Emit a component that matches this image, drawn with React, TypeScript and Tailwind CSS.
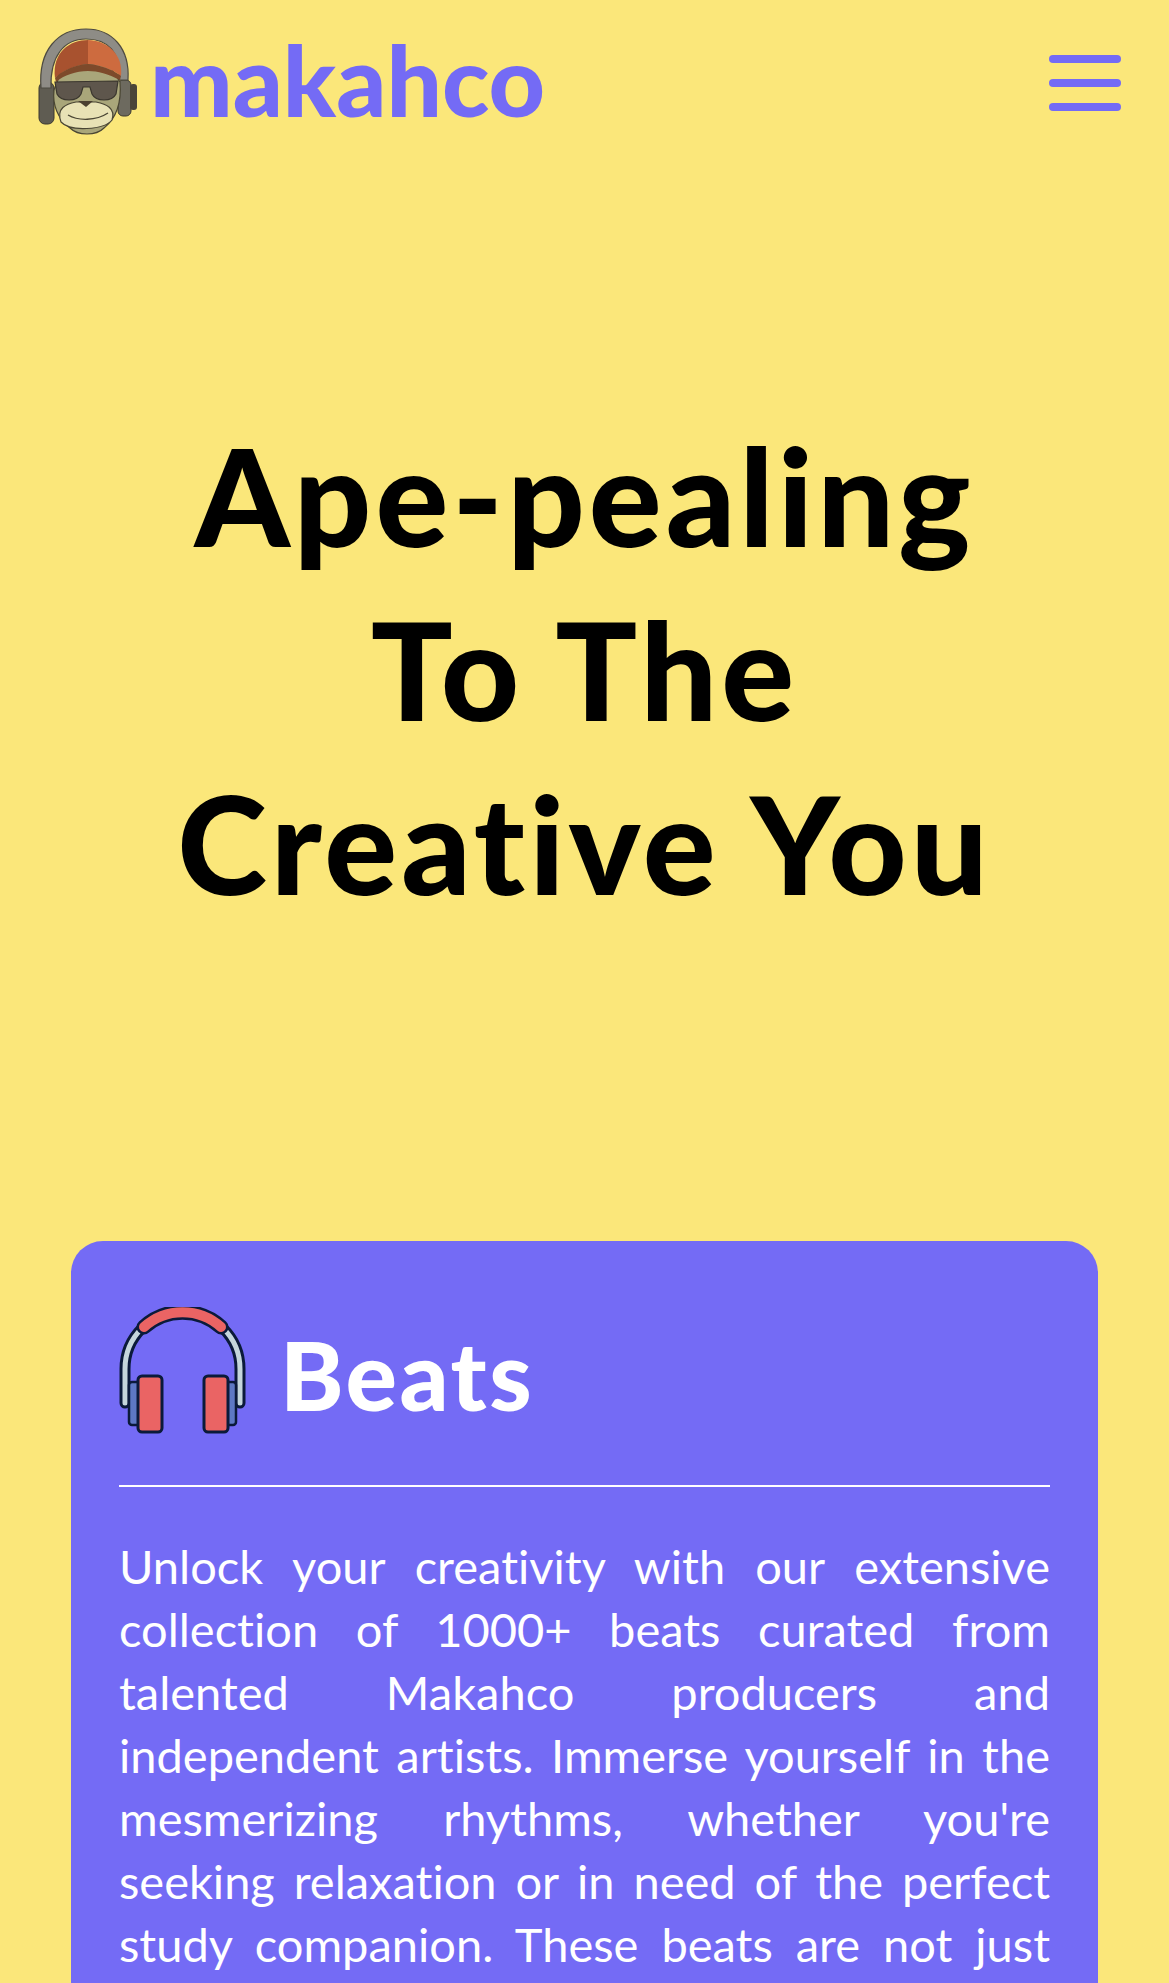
const Logo = () => (
  <svg viewBox="0 0 112 120" className="w-[112px] h-[120px] shrink-0">
    <rect x="11" y="62" width="15" height="42" rx="6" fill="#5f5c52" stroke="#3c392f" strokeWidth="1" />
    <rect x="90" y="60" width="13" height="36" rx="5" fill="#6d6a5f" stroke="#3c392f" strokeWidth="1" />
    <rect x="102" y="64" width="7" height="26" rx="3" fill="#4a4539" />
    <path d="M13 68 C10 30 30 9 58 9 C84 9 102 28 100 60 L91 60 C93 32 80 19 58 19 C36 19 22 36 23 68 Z" fill="#8e8c86" stroke="#4d4a41" strokeWidth="1.2" />
    <path d="M26 70 C24 88 32 100 42 108 C50 116 68 116 76 108 C86 100 94 86 92 62 L80 44 L36 44 Z" fill="#a9a67a" stroke="#4a4634" strokeWidth="1.2" />
    <path d="M27 58 C24 32 42 20 60 20 L60 44 C48 45 36 50 27 58 Z" fill="#a8522f" />
    <path d="M60 20 C78 20 96 34 93 56 C84 49 72 45 60 44 Z" fill="#cd6b3f" />
    <path d="M27 58 C36 49 48 45 60 44 C72 45 84 49 93 56 L92 60 C80 54 70 51 60 51 C48 51 36 55 28 62 Z" fill="#7d4a2b" />
    <path d="M27 62 L90 61 L88 74 C84 82 68 82 64 74 L62 67 L55 67 L53 74 C49 82 33 82 29 74 Z" fill="#5e564c" stroke="#3a362e" strokeWidth="1.2" />
    <path d="M33 102 C28 88 38 84 48 82 L68 82 C78 84 88 88 84 100 C76 110 42 112 33 102 Z" fill="#e8e2b5" stroke="#4a4634" strokeWidth="1.2" />
    <path d="M50 81 L65 81 L58 87 Z" fill="#4a4030" />
    <path d="M40 95 C50 101 68 101 80 93" fill="none" stroke="#4a4634" strokeWidth="1.3" />
  </svg>
);

const Headphones = () => (
  <svg viewBox="0 0 127 127" className="w-[127px] h-[127px] shrink-0">
    <path d="M6 96 V62 A57.5 57.5 0 0 1 121 62 V96" fill="none" stroke="#0b1a3a" strokeWidth="11" strokeLinecap="round" />
    <path d="M6 96 V62 A57.5 57.5 0 0 1 121 62 V96" fill="none" stroke="#c5d6dc" strokeWidth="5" strokeLinecap="round" />
    <path d="M25 20 A57.5 57.5 0 0 1 102 20" fill="none" stroke="#0b1a3a" strokeWidth="15" strokeLinecap="round" />
    <path d="M25 20 A57.5 57.5 0 0 1 102 20" fill="none" stroke="#ea6464" strokeWidth="10" strokeLinecap="round" />
    <rect x="10" y="75" width="14" height="43" rx="3" fill="#5e78c4" stroke="#0b1a3a" strokeWidth="2.5" />
    <rect x="103" y="75" width="14" height="43" rx="3" fill="#5e78c4" stroke="#0b1a3a" strokeWidth="2.5" />
    <rect x="19" y="69" width="24" height="56" rx="4" fill="#ea6464" stroke="#0b1a3a" strokeWidth="3" />
    <rect x="85" y="69" width="24" height="56" rx="4" fill="#ea6464" stroke="#0b1a3a" strokeWidth="3" />
  </svg>
);

const lines = [
  "Unlock your creativity with our extensive",
  "collection of 1000+ beats curated from",
  "talented Makahco producers and",
  "independent artists. Immerse yourself in the",
  "mesmerizing rhythms, whether you're",
  "seeking relaxation or in need of the perfect",
  "study companion. These beats are not just",
];

const App = () => {
  return (
    <div className="h-[1983px] overflow-hidden bg-[#fbe77a] text-black font-['Lato','Liberation_Sans',sans-serif] [font-variant-ligatures:none]">
      <header className="flex items-center justify-between pl-[28px] pr-[48px] pt-[20px]">
        <div className="flex items-center gap-[10px]">
          <Logo />
          <span className="-mt-[2px] text-[98px] leading-[120px] font-black text-[#746bf5]">makahco</span>
        </div>
        <div className="flex flex-col gap-[16px] mt-[6px]">
          <span className="block w-[72px] h-[8px] rounded-full bg-[#746bf5]" />
          <span className="block w-[72px] h-[8px] rounded-full bg-[#746bf5]" />
          <span className="block w-[72px] h-[8px] rounded-full bg-[#746bf5]" />
        </div>
      </header>

      <h1 className="mt-[268px] text-center text-[136px] leading-[174px] font-black tracking-[4px]">
        Ape-pealing
        <br />
        To The
        <br />
        Creative You
      </h1>

      <section className="mx-[71px] mt-[311px] rounded-[32px] bg-[#746bf5] px-[48px] pt-[66px] pb-[40px] text-white">
        <div className="flex items-center gap-[34px] pb-[51px] border-b-2 border-white">
          <Headphones />
          <h2 className="mt-[6px] text-[96px] leading-[120px] font-black tracking-[2.5px]">Beats</h2>
        </div>
        <div className="mt-[48px] text-[47px] leading-[63px]">
          {lines.map((line) => (
            <p key={line} className="text-justify [text-align-last:justify] whitespace-nowrap">
              {line}
            </p>
          ))}
        </div>
      </section>
    </div>
  );
};

export default App;
